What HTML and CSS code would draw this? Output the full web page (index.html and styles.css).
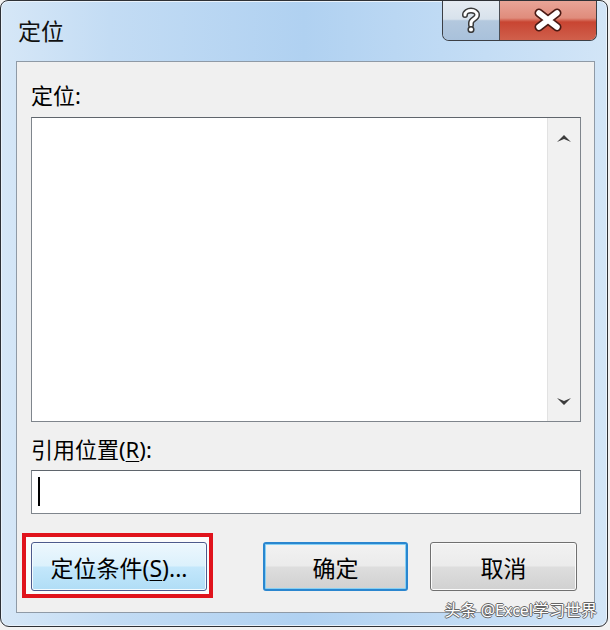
FILE: index.html
```html
<!DOCTYPE html>
<html lang="zh-CN">
<head>
    <meta charset="UTF-8">
    <title>定位</title>
    <link rel="stylesheet" href="styles.css">
</head>
<body>
    <div class="window">
        <div class="titlebar">
            <span class="title">定位</span>
            <div class="caption-buttons">
                <div class="cap-btn help">
                    <svg width="20" height="26" viewBox="0 0 20 26">
                        <path d="M4 8 C4 2 16 2 16 8 C16 12 10 12 10 16 L10 18" fill="none" stroke="#3a3a3a" stroke-width="6" stroke-linecap="round"/>
                        <path d="M4 8 C4 2 16 2 16 8 C16 12 10 12 10 16 L10 18" fill="none" stroke="#fff" stroke-width="3" stroke-linecap="round"/>
                        <circle cx="10" cy="22.5" r="2.8" fill="#fff" stroke="#3a3a3a" stroke-width="1.5"/>
                    </svg>
                </div>
                <div class="cap-btn close">
                    <svg width="30" height="24" viewBox="0 0 30 24">
                        <path d="M6 5 L24 19 M24 5 L6 19" stroke="#4a1a14" stroke-width="9" stroke-linecap="round"/>
                        <path d="M6 5 L24 19 M24 5 L6 19" stroke="#fff" stroke-width="5.5" stroke-linecap="round"/>
                    </svg>
                </div>
            </div>
        </div>

        <div class="panel">
            <div class="label">定位:</div>
            <div class="listbox">
                <div class="list-items"></div>
                <div class="scrollbar">
                    <svg width="14" height="8" viewBox="0 0 14 8"><path d="M0 8 L7 1 L14 8 L7 5 Z" fill="#3d3d3d"/></svg>
                    <svg width="14" height="8" viewBox="0 0 14 8"><path d="M0 0 L7 7 L14 0 L7 3 Z" fill="#3d3d3d"/></svg>
                </div>
            </div>

            <div class="label ref-label">引用位置(<u>R</u>):</div>
            <div class="textbox"><span class="caret"></span></div>

            <div class="button-row">
                <div class="mark">
                    <button class="btn btn-hover">定位条件(<u>S</u>)...</button>
                </div>
                <button class="btn btn-default">确定</button>
                <button class="btn btn-cancel">取消</button>
            </div>
        </div>

        <div class="watermark">头条 @Excel学习世界</div>
    </div>
</body>
</html>
```

FILE: styles.css
```css
* {
    margin: 0;
    padding: 0;
    box-sizing: border-box;
}

body {
    width: 610px;
    height: 630px;
    background: #f2f2f2;
    font-family: "Noto Sans", "Noto Sans CJK SC", sans-serif;
    color: #000;
    overflow: hidden;
}

.window {
    position: relative;
    width: 608px;
    height: 627px;
    border: 1px solid #2e3136;
    border-radius: 8px 8px 9px 9px;
    background: linear-gradient(90deg, #d6e7f7 0%, #c3dcf4 18%, #b0d1f1 50%, #c4ddf5 80%, #d2e5f7 100%);
    box-shadow: inset 0 0 0 1px #e9f2fb;
    display: flex;
    flex-direction: column;
    overflow: hidden;
}

.titlebar {
    height: 60px;
    display: flex;
    justify-content: space-between;
    align-items: flex-start;
    padding-left: 17px;
    padding-right: 10px;
}

.title {
    font-size: 23px;
    line-height: 60px;
    color: #111;
}

.caption-buttons {
    display: flex;
    height: 41px;
    margin-top: -1px;
    border: 1px solid #3c3f45;
    border-top: none;
    border-radius: 0 0 7px 7px;
    overflow: hidden;
}

.cap-btn {
    display: flex;
    align-items: center;
    justify-content: center;
    height: 100%;
}

.help {
    width: 57px;
    border-right: 1px solid #4b4e55;
    background: linear-gradient(#e6ecf2 0%, #d8e2ec 48%, #b3c8de 52%, #a9c1db 100%);
    box-shadow: inset 0 1px 0 #fff;
}

.close {
    width: 96px;
    background: linear-gradient(#e9a699 0%, #e08c7c 45%, #c84532 55%, #d0604c 100%);
}

.panel {
    margin: 0 12px 13px 15px;
    flex: 1;
    background: #f0f0f0;
    border: 1px solid #8f9aa6;
    padding: 19px 13px 21px 14px;
    display: flex;
    flex-direction: column;
}

.label {
    font-size: 22px;
    line-height: 28px;
    height: 28px;
    margin-bottom: 8px;
}

.ref-label {
    margin-top: 13px;
    margin-bottom: 7px;
}

.label u,
.btn u {
    text-decoration-thickness: 1px;
    text-underline-offset: 3px;
}

.listbox {
    height: 305px;
    border: 1px solid #7f858c;
    border-top-color: #5f656c;
    background: #fff;
    display: flex;
}

.list-items {
    flex: 1;
}

.scrollbar {
    width: 33px;
    background: #f1f1f1;
    border-left: 1px solid #e2e2e2;
    display: flex;
    flex-direction: column;
    justify-content: space-between;
    align-items: center;
    padding: 16px 0 15px;
}

.textbox {
    height: 44px;
    border: 1px solid #7f858c;
    border-top-color: #5f656c;
    background: #fff;
    padding: 6px 0 0 6px;
}

.caret {
    display: block;
    width: 2px;
    height: 29px;
    background: #000;
}

.button-row {
    display: flex;
    align-items: flex-start;
    margin-top: 28px;
}

.mark {
    flex-shrink: 0;
    display: flex;
    margin: -9px 50px -7px -9px;
    padding: 5px 2px 3px 5px;
    border: 4px solid #e0131c;
    background: #fbfbfb;
}

.btn {
    flex-shrink: 0;
    height: 49px;
    width: 145px;
    font-family: inherit;
    font-size: 23px;
    color: #000;
    border: 1px solid #707070;
    border-radius: 3px;
    background: linear-gradient(#f2f2f2 0%, #ebebeb 48%, #dddddd 52%, #d1d1d1 100%);
    box-shadow: inset 0 0 0 1px #fbfbfb;
}

.btn-hover {
    width: 176px;
    border-color: #4c5a8c;
    background: linear-gradient(#edf7fd 0%, #dcf1fc 48%, #c3e7fb 52%, #b0ddf6 100%);
    box-shadow: inset 0 0 0 1px #f4fbff;
}

.btn-default {
    margin-right: 22px;
    border: 2px solid #2a86cf;
    box-shadow: inset 0 0 0 1px #86d0f4;
}

.btn-cancel {
    width: 147px;
}

.watermark {
    position: absolute;
    right: 10px;
    bottom: 7px;
    font-size: 16px;
    line-height: 18px;
    color: #fff;
    text-shadow: 1px 0 0 #666, -1px 0 0 #666, 0 1px 0 #666, 0 -1px 0 #666;
}
```
